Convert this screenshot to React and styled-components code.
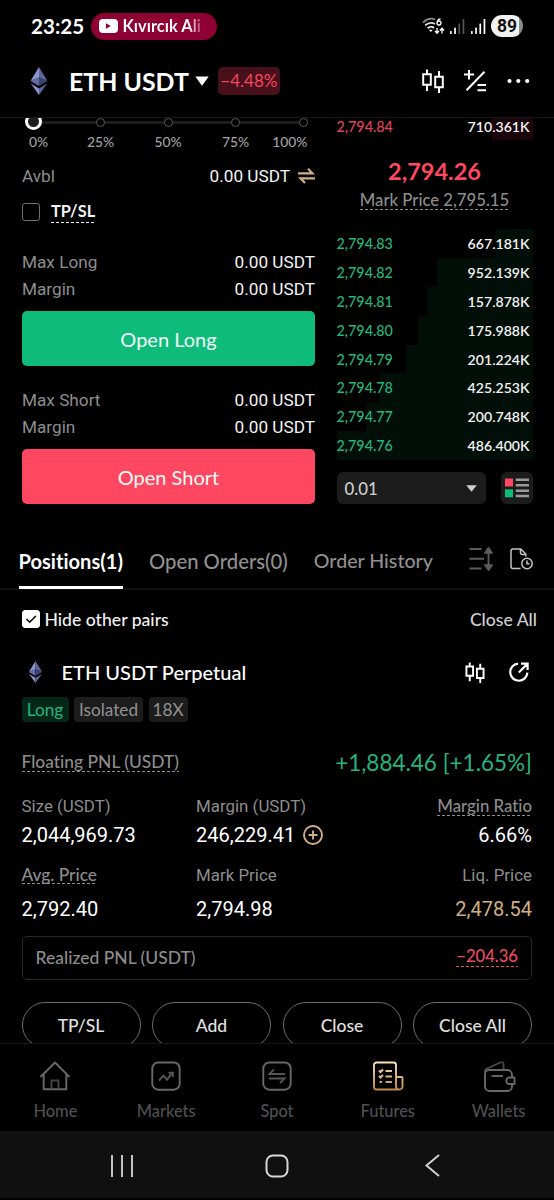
import React from 'react';
import styled, { createGlobalStyle, css } from 'styled-components';

const c = {
  green: '#0ebb7a',
  greenText: '#24b57e',
  red: '#ff4761',
  gold: '#d0b083',
  label: '#8d8d8d',
  line: '#161616',
  panel: '#1c1c1c',
};
const brand = css`font-family: Lato, 'Open Sans', sans-serif;`;
const system = css`font-family: Roboto, 'Liberation Sans', sans-serif;`;

const Global = createGlobalStyle`
  * { box-sizing: border-box; }
  body { margin: 0; background: #000; }
  svg { display: block; flex: none; overflow: visible; }
`;

const Screen = styled.div`
  width: 554px;
  height: 1200px;
  display: flex;
  flex-direction: column;
  overflow: hidden;
  background: #000;
  color: #fff;
  white-space: nowrap;
  font-variant-ligatures: none;
  ${brand}
`;

/* status bar */
const StatusBar = styled.div`
  height: 52px;
  flex: none;
  display: flex;
  align-items: center;
  padding: 0 31px 0 31px;
`;
const Clock = styled.span`
  width: 59.5px;
  font-size: 20.6px;
  font-weight: 700;
`;
const MediaPill = styled.div`
  height: 27px;
  width: 126px;
  padding-left: 8px;
  display: flex;
  align-items: center;
  gap: 5px;
  border-radius: 14px;
  background: #8f0033;
  font-size: 16.5px;
  font-weight: 700;
`;
const FadeOut = styled.span`
  background: linear-gradient(90deg, #fff 84%, #fff4 100%);
  background-clip: text;
  color: transparent;
`;
const StatusIcons = styled.div`
  margin-left: auto;
  display: flex;
  align-items: center;
  gap: 6px;
`;
const Battery = styled.div`
  width: 32px;
  height: 22px;
  border-radius: 11px;
  background: linear-gradient(90deg, #f2f2f2 89%, #8c8c8c 89%);
  color: #111;
  font: 700 17.5px/22px Roboto, sans-serif;
  text-align: center;
`;

/* pair header */
const Header = styled.header`
  height: 66px;
  flex: none;
  display: flex;
  align-items: center;
  padding: 0 24px 8px 30px;
  border-bottom: 1px solid ${c.line};
`;
const Pair = styled.h1`
  margin: 0 6px 0 21px;
  font-size: 24.9px;
  font-weight: 700;
  line-height: 30px;
`;
const Change = styled.span`
  width: 62px;
  height: 28px;
  margin-left: 9px;
  border-radius: 5px;
  background: #47101a;
  color: #f5475f;
  font-size: 17px;
  line-height: 28px;
  text-align: center;
`;
const HeaderActions = styled.div`
  margin-left: auto;
  display: flex;
  align-items: center;
  gap: 20px;
`;

const Content = styled.main`
  height: 925px;
  flex: none;
  overflow: hidden;
`;

/* order form */
const Trade = styled.section`
  display: flex;
  height: 412px;
  padding-left: 22px;
`;
const Form = styled.div`
  width: 293px;
  margin-right: 21.5px;
`;
const Track = styled.div`
  position: relative;
  height: 9px;
  margin: 0 7.5px 0 74px;
  display: flex;
  align-items: center;
  justify-content: space-between;
  &::before {
    content: '';
    position: absolute;
    left: -60px;
    right: 4px;
    height: 3px;
    background: #1d1d1d;
  }
`;
const Stop = styled.i`
  position: relative;
  width: 9px;
  height: 9px;
  border: 1.5px solid #5a5a5a;
  border-radius: 50%;
  background: #000;
`;
const Knob = styled.i`
  position: absolute;
  left: -71.5px;
  top: -5px;
  width: 17px;
  height: 17px;
  border: 3px solid #fff;
  border-radius: 50%;
  background: #1d1d1d;
`;
const Percents = styled.div`
  display: grid;
  grid-template-columns: 37.5px 68px 67px 68px 38px;
  margin: 5px 0 13px 7px;
  height: 20px;
  line-height: 20px;
  color: #a2a2a2;
  font-size: 13.8px;
  font-weight: 500;
  text-align: center;
  span:first-child { text-align: left; }
  span:last-child { text-align: right; }
`;
const FormRow = styled.div`
  display: flex;
  align-items: center;
  justify-content: space-between;
  height: ${p => p.$h || 27}px;
  color: ${c.label};
  font-size: 17.2px;
  ${system}
`;
const Amount = styled.span`
  display: flex;
  align-items: center;
  gap: 8px;
  color: #f4f4f4;
`;
const CheckLine = styled.div`
  display: flex;
  align-items: center;
  gap: 11px;
  height: 40px;
  margin: 6px 0 16px;
`;
const Box = styled.span`
  width: 18px;
  height: 18px;
  display: grid;
  place-items: center;
  border-radius: 3px;
  border: 1.5px solid ${p => (p.$on ? '#fff' : '#707070')};
  background: ${p => (p.$on ? '#fff' : 'transparent')};
`;
const Dashed = styled.span`
  display: inline-block;
  height: ${p => p.$h || 19}px;
  line-height: ${p => (p.$h || 19) - (p.$lift || 0)}px;
  background: repeating-linear-gradient(90deg, currentColor 0 3px, transparent 3px 5px) bottom / 100% 1px no-repeat;
`;
const TpSl = styled(Dashed)`
  color: #f2f2f2;
  font-size: 16.3px;
  font-weight: 700;
`;
const Submit = styled.button`
  display: block;
  width: 100%;
  height: 55px;
  margin: 9px 0 20px;
  padding: 0;
  border: 0;
  border-radius: 5px;
  background: ${p => p.$bg};
  color: #effcf6;
  font-size: 20px;
  ${brand}
`;

/* order book */
const Book = styled.div`
  width: 196px;
`;
const Level = styled.div`
  display: flex;
  align-items: center;
  justify-content: space-between;
  height: 28.9px;
  padding-right: 3px;
  color: #f2f2f2;
  font-size: 14.1px;
  font-weight: 600;
  background: linear-gradient(${p => p.$tint}, ${p => p.$tint}) right / ${p => p.$depth}px 100% no-repeat;
`;
const AskLevel = styled(Level)`
  height: 29px;
  margin-top: -7px;
  padding-top: 2px;
`;
const LevelPrice = styled.span`
  color: ${p => p.$color};
  font-size: 14.3px;
  font-weight: 500;
`;
const Quote = styled.div`
  height: 89px;
  padding-top: 17px;
  text-align: center;
`;
const LastPrice = styled.div`
  height: 30px;
  line-height: 29px;
  color: ${c.red};
  font-size: 23.5px;
  font-weight: 700;
`;
const MarkPrice = styled(Dashed)`
  margin-top: 4px;
  color: #8d8d8d;
  font-size: 16.7px;
  font-weight: 500;
`;
const BookControls = styled.div`
  display: flex;
  justify-content: space-between;
  margin-top: 12px;
`;
const Precision = styled.div`
  width: 149.5px;
  height: 32px;
  padding: 0 9px 0 8px;
  display: flex;
  align-items: center;
  justify-content: space-between;
  border-radius: 6px;
  background: ${c.panel};
  color: #cfcfcf;
  font-size: 16.8px;
  font-weight: 500;
`;
const ViewToggle = styled.div`
  width: 32px;
  height: 32px;
  display: grid;
  place-items: center;
  border-radius: 6px;
  background: ${c.panel};
`;

/* positions */
const Tabs = styled.nav`
  height: 60px;
  display: flex;
  align-items: center;
  padding: 0 21px 0 18.5px;
  border-bottom: 2px solid #111;
`;
const Tab = styled.span`
  height: 59px;
  line-height: 62px;
  margin-right: 26px;
  font-size: ${p => p.$size}px;
  font-weight: ${p => (p.$active ? 700 : 500)};
  color: ${p => (p.$active ? '#fff' : '#909090')};
  box-shadow: ${p => (p.$active ? 'inset 0 -3px #fff' : 'none')};
`;
const TabTools = styled.div`
  margin-left: auto;
  display: flex;
  align-items: center;
  gap: 16px;
`;
const FilterRow = styled.div`
  height: 60px;
  display: flex;
  align-items: center;
  justify-content: space-between;
  padding: 0 17px 2px 21.5px;
  font-size: 17.6px;
  font-weight: 500;
  color: #cecece;
`;
const Toggle = styled.label`
  display: flex;
  align-items: center;
  gap: 5px;
  color: #f2f2f2;
`;
const Position = styled.section`
  padding: 0 22px 0 21.5px;
`;
const PositionHead = styled.div`
  height: 44px;
  margin-bottom: 3px;
  padding-left: 6px;
  display: flex;
  align-items: center;
`;
const PositionName = styled.h2`
  margin: 0 auto 0 19px;
  font-size: 20px;
  font-weight: 500;
`;
const PositionTools = styled.div`
  display: flex;
  align-items: center;
  gap: 24px;
  margin-right: 3px;
`;
const Tags = styled.div`
  display: flex;
  gap: 5.5px;
`;
const Tag = styled.span`
  height: 25px;
  width: ${p => p.$w}px;
  line-height: 25px;
  border-radius: 4px;
  text-align: center;
  font-size: 17.2px;
  color: ${p => (p.$long ? '#24b57e' : '#929292')};
  background: ${p => (p.$long ? '#04271a' : '#1c1c1c')};
`;
const PnlRow = styled.div`
  height: 40px;
  margin: 20px 0 14px;
  display: flex;
  align-items: center;
  justify-content: space-between;
  color: #8d8d8d;
  font-size: 17.4px;
  font-weight: 500;
`;
const Pnl = styled.span`
  color: ${c.greenText};
  font-size: 22.5px;
  font-weight: 400;
`;
const Columns = styled.div`
  display: grid;
  grid-template-columns: 174.5px 1fr auto;
  align-items: center;
  > :last-child { justify-self: end; }
`;
const Labels = styled(Columns)`
  height: 20px;
  color: #8d8d8d;
  font-size: 16.9px;
  ${system}
`;
const BrandLabel = styled(Dashed)`
  font-size: ${p => p.$size || 16.8}px;
  font-weight: 500;
  ${brand}
`;
const Values = styled(Columns)`
  height: 26px;
  margin: ${p => p.$m};
  font-size: 20px;
  ${system}
`;
const WithIcon = styled.span`
  display: flex;
  align-items: center;
  gap: 8px;
`;
const Liquidation = styled.span`
  color: ${c.gold};
`;
const Realized = styled.div`
  height: 44px;
  padding: 0 13px 2px;
  display: flex;
  align-items: center;
  justify-content: space-between;
  border: 1.5px solid #292929;
  border-radius: 5px;
  color: #8d8d8d;
  font-size: 17.5px;
  font-weight: 500;
`;
const Loss = styled(Dashed)`
  color: #ed4b62;
  font-size: 16.6px;
`;
const Actions = styled.div`
  display: grid;
  grid-template-columns: repeat(4, 1fr);
  gap: 11.5px;
  margin-top: 22px;
`;
const Pill = styled.button`
  height: 46px;
  padding: 0;
  border: 1.3px solid #6c6c6c;
  border-radius: 23px;
  background: none;
  color: #e0e0e0;
  font-size: 17.5px;
  font-weight: 500;
  ${brand}
`;

/* bottom navigation */
const BottomNav = styled.nav`
  height: 88px;
  flex: none;
  display: grid;
  grid-template-columns: repeat(5, 1fr);
  border-top: 1px solid ${c.line};
`;
const NavItem = styled.a`
  display: flex;
  flex-direction: column;
  align-items: center;
  padding-top: 16px;
  gap: 6px;
  color: #686868;
  font-size: 16.4px;
  font-weight: 500;
  line-height: 26px;
`;
const NavLabel = styled.span`
  color: #505050;
`;
const SystemNav = styled.div`
  height: 67px;
  flex: none;
  display: grid;
  grid-template-columns: repeat(3, 155px);
  justify-content: center;
  place-items: center;
  padding-top: 2px;
  background: #101010;
`;

/* icons */
const Eth = ({ w, h }) => (
  <svg width={w} height={h} viewBox="0 0 18 28">
    <path d="M9 0 0.5 14 9 10.4z" fill="#8a94cc" />
    <path d="M9 0 17.5 14 9 10.4z" fill="#5d659c" />
    <path d="M.5 14 9 10.4V19z" fill="#626ba3" />
    <path d="M17.5 14 9 10.4V19z" fill="#3b4272" />
    <path d="M.8 16.6 9 21.4V28z" fill="#8a94cc" />
    <path d="M17.2 16.6 9 21.4V28z" fill="#5d659c" />
  </svg>
);
const Candles = ({ w, h, s = 2 }) => (
  <svg width={w} height={h} viewBox="0 0 22 24" fill="none" stroke="#fff" strokeWidth={s}>
    <path d="M1.2 5.2h7.6v10.600H1.200zM5 .5v4.700M5 15.800V22M13.200 7.700h7.600v10.600h-7.600zM17 2v5.700M17 18.300V24" />
  </svg>
);
const Formula = () => (
  <svg width="23" height="22" viewBox="0 0 23 22" fill="none" stroke="#fff" strokeWidth="2">
    <path d="M0 4.500h10M5 0v9.500M20.500 1.800 2.500 20.200M13.500 15h8.500M13.500 20.200h8.500" />
  </svg>
);
const More = () => (
  <svg width="23" height="6" viewBox="0 0 23 6" fill="#fff">
    <circle cx="2.500" cy="3" r="2.100" /><circle cx="11.300" cy="3" r="2.100" /><circle cx="20.200" cy="3" r="2.100" />
  </svg>
);
const YouTube = () => (
  <svg width="19" height="14" viewBox="0 0 19 14">
    <rect width="19" height="14" rx="4" fill="#fff" /><path d="M7 4.200v5.600L11.800 7z" fill="#8f0033" />
  </svg>
);
const Wifi = () => (
  <svg width="22" height="17" viewBox="0 0 22 17" fill="none" strokeWidth="1.800">
    <path d="M1 4.500C5 .700 9.500 0 13 1.600" stroke="#888" />
    <path d="M3.200 7.300C6 5 10 4.300 13 6" stroke="#ddd" />
    <path d="M5.700 10.200c2-1.700 4.800-1.700 6.300-.2" stroke="#fff" />
    <path d="M6.800 11.800h4L8.800 14z" fill="#fff" />
    <path d="M18.500 1c-2 0-3.500 2-3.500 4a2 2 0 1 0 2-2q-1.500 0-2 1.500" stroke="#fff" strokeWidth="1.300" />
    <path d="M15 10v5M13 13l2 2.300L17 13M20 15.500v-5M18 12.500l2-2.300 2 2.300" stroke="#fff" strokeWidth="1.300" />
  </svg>
);
const Signal = ({ bars }) => (
  <svg width="14.500" height="15" viewBox="0 0 14.5 15">
    {[3, 6.5, 10.5, 15].map((h, i) => (
      <rect key={i} x={i * 4.2} y={15 - h} width="1.700" height={h} rx=".6" fill={i < bars ? '#fff' : '#555'} />
    ))}
  </svg>
);
const Caret = ({ w, h, fill }) => (
  <svg width={w} height={h} viewBox="0 0 14 10" preserveAspectRatio="none"><path d="M.3 .5h13.400L7 9.800z" fill={fill} /></svg>
);
const Transfer = () => (
  <svg width="17" height="16" viewBox="0 0 17 16" fill="none" stroke={c.gold} strokeWidth="2.200">
    <path d="M0 5.400h14.500L10 .8M17 10.400H2.500L7 15" />
  </svg>
);
const BookView = () => (
  <svg width="24" height="20" viewBox="0 0 24 20">
    <path fill={c.red} d="M0 .5h8v8H0z" /><path fill={c.green} d="M0 11.300h8v8H0z" />
    <path stroke="#9a9a9a" strokeWidth="2.500" d="M10.700 1.700H24M10.700 7.200H24M10.700 12.700H24M10.700 18H24" />
  </svg>
);
const Sort = () => (
  <svg width="25" height="24" viewBox="0 0 25 24" fill="none" stroke="#5c5c5c" strokeWidth="1.900">
    <path d="M.5 2h12M.5 11.800H15M.5 21.500h12M19.500 5v14" />
    <path d="M15.800 6 19.500.8 23.200 6zM15.800 18l3.700 5.200 3.700-5.200z" fill="#5c5c5c" strokeWidth="1.500" strokeLinejoin="round" />
  </svg>
);
const DocClock = () => (
  <svg width="23" height="22" viewBox="0 0 23 22" fill="none" stroke="#c4c4c4" strokeWidth="1.500">
    <path d="M10.500 20.500H3A2 2 0 0 1 1 18.500V3a2 2 0 0 1 2-2h7.800l5 5v2.500M10.500 1v3.500a2 2 0 0 0 2 2h3.300" />
    <circle cx="17" cy="15.500" r="5.200" /><path d="M17 12.500v3.300h2.500" />
  </svg>
);
const Share = () => (
  <svg width="20" height="20" viewBox="0 0 20 20" fill="none" stroke="#fff" strokeWidth="2.200">
    <path d="M9 1.600a8.600 8.600 0 1 0 9.400 9M9.800 10.500 18 2.300M12 1.600h6.600V8" />
  </svg>
);
const Check = () => (
  <svg width="12" height="9" viewBox="0 0 12 9" fill="none" stroke="#000" strokeWidth="1.600"><path d="m1.500 4 3.200 3.200L10.800 1" /></svg>
);
const PlusCircle = () => (
  <svg width="20" height="20" viewBox="0 0 20 20" fill="none" stroke={c.gold} strokeWidth="1.900">
    <circle cx="10" cy="10" r="9" /><path d="M5.500 10h9M10 5.500v9" />
  </svg>
);
const navSvg = { width: 32, height: 32, viewBox: '0 0 32 32', fill: 'none', stroke: 'currentColor', strokeWidth: 1.9 };
const HomeIcon = () => (
  <svg {...navSvg}>
    <path d="M1.500 17 16 2.500 30.500 17M4.700 14v15.200h22.600V14" strokeLinejoin="round" />
    <path d="M12.500 29v-8.500h7V29" stroke="#444" />
  </svg>
);
const MarketsIcon = () => (
  <svg {...navSvg}>
    <rect x="2.300" y="2.500" width="27.400" height="27.200" rx="6" />
    <path d="m9 20.500 4.500-4.800 3.500 4 5.500-7M18.500 12.700h4.300V17" stroke="#555" />
  </svg>
);
const SpotIcon = () => (
  <svg {...navSvg}>
    <rect x="2.300" y="2.500" width="27.400" height="27.200" rx="6" />
    <path d="M24 14H8.500l4.500-4.500M8 18.500h15.500L19 23" stroke="#555" />
  </svg>
);
const FuturesIcon = () => (
  <svg {...navSvg} stroke="url(#amber)">
    <defs>
      <linearGradient id="amber" gradientUnits="userSpaceOnUse" x1="0" y1="2" x2="0" y2="30">
        <stop offset="0" stopColor="#fbe3bd" /><stop offset="1" stopColor="#c2884a" />
      </linearGradient>
    </defs>
    <path d="M24 25V5a2.500 2.500 0 0 0-2.500-2.500H4.500A2.500 2.500 0 0 0 2 5v22a2.500 2.500 0 0 0 2.500 2.500h23a3 3 0 0 0 3-3V18a1 1 0 0 0-1-1H24v9q0 3.500 3.500 3.500" />
    <path d="m7 10.500 1.500 1.500L11 9.500M13.500 11h6.500M7 16l1.500 1.500L11 15M13.500 16.500h6.500M7.500 22H10M13.500 22h6.500" strokeWidth="2.200" />
  </svg>
);
const WalletIcon = () => (
  <svg {...navSvg}>
    <path d="M2 12V10.500q0-1.200 2-1.800L17.500 2.300Q20.500 1.500 20.500 4v5.500" stroke="#454545" />
    <path d="M29 17.500V15a5 5 0 0 0-5-5H6a4 4 0 0 0-4 4v12.500A4.500 4.500 0 0 0 6.500 31h18a4.500 4.500 0 0 0 4.500-4.500V24" />
    <path d="M31.500 17.500h-5a3.200 3.200 0 0 0 0 6.500h5z" strokeLinejoin="round" /><path d="M8.500 16H20" />
  </svg>
);

const bids = [
  ['2,794.83', '667.181K', 38], ['2,794.82', '952.139K', 96], ['2,794.81', '157.878K', 106],
  ['2,794.80', '175.988K', 115], ['2,794.79', '201.224K', 127], ['2,794.78', '425.253K', 153],
  ['2,794.77', '200.748K', 167], ['2,794.76', '486.400K', 196],
];
const navItems = [['Home', HomeIcon], ['Markets', MarketsIcon], ['Spot', SpotIcon], ['Futures', FuturesIcon], ['Wallets', WalletIcon]];

const OrderSide = ({ name, bg }) => (
  <>
    <FormRow>Max {name}<Amount>0.00 USDT</Amount></FormRow>
    <FormRow>Margin<Amount>0.00 USDT</Amount></FormRow>
    <Submit $bg={bg}>Open {name}</Submit>
  </>
);

export default function App() {
  return (
    <Screen>
      <Global />
      <StatusBar>
        <Clock>23:25</Clock>
        <MediaPill><YouTube /><FadeOut>Kıvırcık Ali</FadeOut></MediaPill>
        <StatusIcons><Wifi /><Signal bars={2} /><Signal bars={4} /><Battery>89</Battery></StatusIcons>
      </StatusBar>
      <Header>
        <Eth w={18} h={28} />
        <Pair>ETH USDT</Pair>
        <Caret w={14} h={10} fill="#fff" />
        <Change>−4.48%</Change>
        <HeaderActions><Candles w={22} h={24} /><Formula /><More /></HeaderActions>
      </Header>

      <Content>
        <Trade>
          <Form>
            <Track><Knob /><Stop /><Stop /><Stop /><Stop /></Track>
            <Percents>{['0%', '25%', '50%', '75%', '100%'].map(t => <span key={t}>{t}</span>)}</Percents>
            <FormRow $h={21}>Avbl<Amount>0.00 USDT<Transfer /></Amount></FormRow>
            <CheckLine><Box /><TpSl $h={22} $lift={3}>TP/SL</TpSl></CheckLine>
            <OrderSide name="Long" bg={c.green} />
            <OrderSide name="Short" bg={c.red} />
          </Form>
          <Book>
            <AskLevel $tint="#19050a" $depth={41}><LevelPrice $color="#e0465a">2,794.84</LevelPrice>710.361K</AskLevel>
            <Quote>
              <LastPrice>2,794.26</LastPrice>
              <MarkPrice $lift={1}>Mark Price 2,795.15</MarkPrice>
            </Quote>
            {bids.map(([price, size, depth]) => (
              <Level key={price} $tint="#020f09" $depth={depth}><LevelPrice $color={c.greenText}>{price}</LevelPrice>{size}</Level>
            ))}
            <BookControls>
              <Precision>0.01<Caret w={11} h={7} fill="#cfcfcf" /></Precision>
              <ViewToggle><BookView /></ViewToggle>
            </BookControls>
          </Book>
        </Trade>

        <Tabs>
          <Tab $active $size={20.1}>Positions(1)</Tab>
          <Tab $size={20.3}>Open Orders(0)</Tab>
          <Tab $size={19.6}>Order History</Tab>
          <TabTools><Sort /><DocClock /></TabTools>
        </Tabs>
        <FilterRow>
          <Toggle><Box $on><Check /></Box>Hide other pairs</Toggle>
          Close All
        </FilterRow>

        <Position>
          <PositionHead>
            <Eth w={15} h={22} />
            <PositionName>ETH USDT Perpetual</PositionName>
            <PositionTools><Candles w={20} h={21} s={2.2} /><Share /></PositionTools>
          </PositionHead>
          <Tags><Tag $long $w={47}>Long</Tag><Tag $w={69}>Isolated</Tag><Tag $w={39}>18X</Tag></Tags>
          <PnlRow><Dashed $lift={2}>Floating PNL (USDT)</Dashed><Pnl>+1,884.46 [+1.65%]</Pnl></PnlRow>
          <Labels><span>Size (USDT)</span><span>Margin (USDT)</span><BrandLabel $lift={1}>Margin Ratio</BrandLabel></Labels>
          <Values $m="6px 0 17px"><span>2,044,969.73</span><WithIcon>246,229.41<PlusCircle /></WithIcon><span>6.66%</span></Values>
          <Labels><span><BrandLabel $size={17.3}>Avg. Price</BrandLabel></span><span>Mark Price</span><span>Liq. Price</span></Labels>
          <Values $m="11px 0 14px"><span>2,792.40</span><span>2,794.98</span><Liquidation>2,478.54</Liquidation></Values>
          <Realized>Realized PNL (USDT)<Loss $lift={2}>−204.36</Loss></Realized>
          <Actions>{['TP/SL', 'Add', 'Close', 'Close All'].map(t => <Pill key={t}>{t}</Pill>)}</Actions>
        </Position>
      </Content>

      <BottomNav>
        {navItems.map(([name, Icon]) => <NavItem key={name}><Icon /><NavLabel>{name}</NavLabel></NavItem>)}
      </BottomNav>
      <SystemNav>
        <svg width="22" height="22" viewBox="0 0 22 22" stroke="#c4c4c4" strokeWidth="2"><path d="M1 0v22M11 0v22M21 0v22" /></svg>
        <svg width="24" height="24" viewBox="0 0 24 24" fill="none" stroke="#d8d8d8" strokeWidth="2"><rect x="1.500" y="1.500" width="21" height="21" rx="6.500" /></svg>
        <svg width="15" height="23" viewBox="0 0 15 23" fill="none" stroke="#d0d0d0" strokeWidth="2"><path d="M14 1 1.500 11.500 14 22" /></svg>
      </SystemNav>
    </Screen>
  );
}
